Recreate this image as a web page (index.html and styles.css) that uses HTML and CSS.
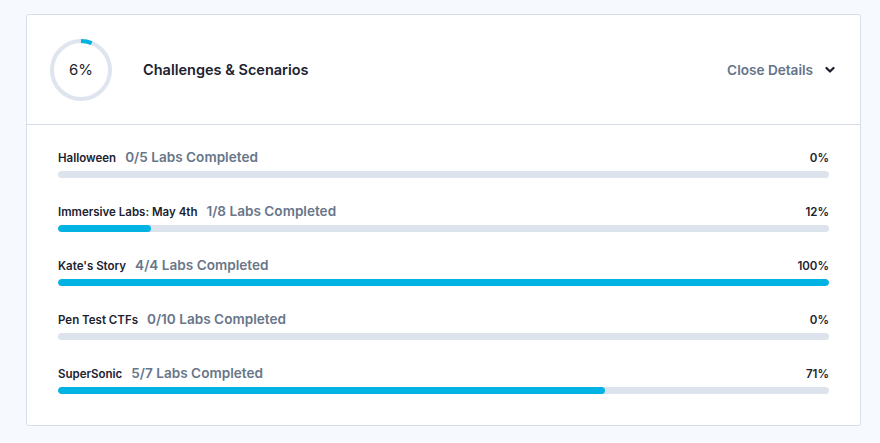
FILE: index.html
```html
<!DOCTYPE html>
<html>
<head>
<meta charset="utf-8">
<link rel="stylesheet" href="styles.css">
</head>
<body>
<div class="card">
  <div class="header">
    <div class="ring">
      <svg width="62" height="62" viewBox="0 0 62 62">
        <circle cx="31" cy="31" r="29" fill="none" stroke="#dfe5ee" stroke-width="4"/>
        <circle cx="31" cy="31" r="29" fill="none" stroke="#00b3e3" stroke-width="4" stroke-dasharray="10.9 171.3" transform="rotate(-90 31 31)"/>
      </svg>
      <span class="ring-text">6%</span>
    </div>
    <div class="title">Challenges &amp; Scenarios</div>
    <div class="toggle">
      <span>Close Details</span>
      <svg width="10" height="8" viewBox="0 0 10 8"><path d="M1.5 2 L5 5.5 L8.5 2" fill="none" stroke="#1a1f2b" stroke-width="2.2" stroke-linecap="round" stroke-linejoin="round"/></svg>
    </div>
  </div>
  <div class="body">
    <div class="row">
      <div class="row-top"><span class="name">Halloween</span><span class="count">0/5 Labs Completed</span><span class="pct">0%</span></div>
      <div class="track"><div class="fill" style="width:0%"></div></div>
    </div>
    <div class="row">
      <div class="row-top"><span class="name">Immersive Labs: May 4th</span><span class="count">1/8 Labs Completed</span><span class="pct">12%</span></div>
      <div class="track"><div class="fill" style="width:12%"></div></div>
    </div>
    <div class="row">
      <div class="row-top"><span class="name">Kate's Story</span><span class="count">4/4 Labs Completed</span><span class="pct">100%</span></div>
      <div class="track"><div class="fill" style="width:100%"></div></div>
    </div>
    <div class="row">
      <div class="row-top"><span class="name">Pen Test CTFs</span><span class="count">0/10 Labs Completed</span><span class="pct">0%</span></div>
      <div class="track"><div class="fill" style="width:0%"></div></div>
    </div>
    <div class="row">
      <div class="row-top"><span class="name">SuperSonic</span><span class="count">5/7 Labs Completed</span><span class="pct">71%</span></div>
      <div class="track"><div class="fill" style="width:71%"></div></div>
    </div>
  </div>
</div>
</body>
</html>
```
FILE: styles.css
```css
html, body { margin: 0; padding: 0; }
body {
  background: #f6f9fd;
  font-family: Inter, "Noto Sans", sans-serif;
  color: #1c2230;
  width: 880px;
  height: 443px;
  padding: 14px 20px 0 26px;
  box-sizing: border-box;
}
.card {
  width: 835px;
  height: 412px;
  box-sizing: border-box;
  background: #fff;
  border: 1px solid #d9dfe8;
  border-radius: 3px;
}
.header {
  display: flex;
  align-items: center;
  height: 110px;
  box-sizing: border-box;
  padding: 0 25px 0 23px;
  border-bottom: 1px solid #d5dce6;
}
.ring {
  position: relative;
  width: 62px;
  height: 62px;
  flex: none;
}
.ring svg { display: block; }
.ring-text {
  position: absolute;
  inset: 0;
  display: flex;
  align-items: center;
  justify-content: center;
  font-size: 15px;
  color: #1c2230;
}
.title {
  margin-left: 31px;
  font-size: 14.5px;
  font-weight: 600;
  flex: 1;
}
.toggle {
  display: flex;
  align-items: center;
  gap: 12px;
  font-size: 13.6px;
  font-weight: 600;
  color: #64738a;
}
.toggle svg { display: block; }
.body {
  padding: 24px 31px 0 31px;
  display: flex;
  flex-direction: column;
  gap: 25px;
}
.row-top {
  display: flex;
  align-items: baseline;
  height: 16px;
}
.name {
  font-size: 11.5px;
  font-weight: 600;
  color: #1c2230;
}
.count {
  margin-left: 9px;
  font-size: 13.6px;
  font-weight: 600;
  color: #687689;
  flex: 1;
}
.pct {
  font-size: 11.5px;
  font-weight: 600;
  color: #1c2230;
}
.track {
  margin-top: 6px;
  height: 7px;
  border-radius: 4px;
  background: #dde3ec;
  overflow: hidden;
}
.fill {
  height: 100%;
  background: #00b3e3;
  border-radius: 4px;
}
```
